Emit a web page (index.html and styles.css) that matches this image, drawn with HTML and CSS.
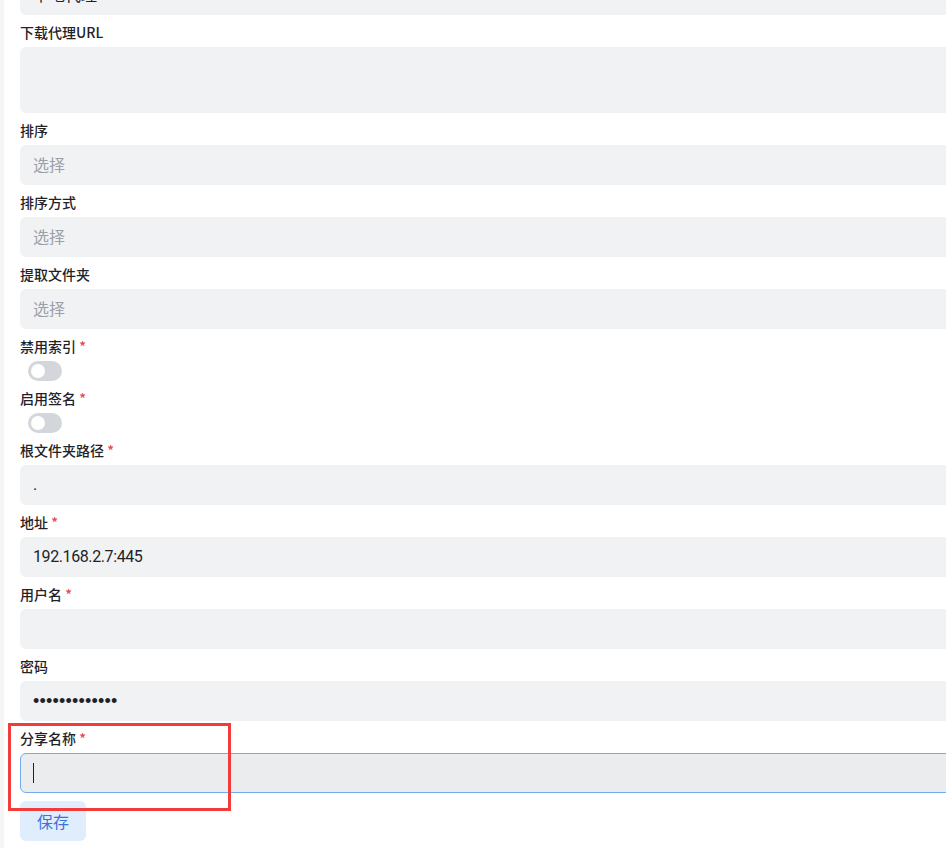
FILE: index.html
```html
<!DOCTYPE html>
<html lang="zh-CN">
<head>
<meta charset="UTF-8">
<meta name="viewport" content="width=device-width, initial-scale=1.0">
<title>存储设置</title>
<link rel="stylesheet" href="styles.css">
</head>
<body>
<div class="page">
    <form class="storage-form">
        <div class="field field-scrolled">
            <div class="control">本地代理</div>
        </div>

        <div class="field">
            <label class="field-label">下载代理URL</label>
            <div class="control control-textarea"></div>
        </div>

        <div class="field">
            <label class="field-label">排序</label>
            <div class="control placeholder">选择</div>
        </div>

        <div class="field">
            <label class="field-label">排序方式</label>
            <div class="control placeholder">选择</div>
        </div>

        <div class="field">
            <label class="field-label">提取文件夹</label>
            <div class="control placeholder">选择</div>
        </div>

        <div class="field">
            <label class="field-label">禁用索引 <span class="required">*</span></label>
            <div class="switch"><span class="switch-knob"></span></div>
        </div>

        <div class="field">
            <label class="field-label">启用签名 <span class="required">*</span></label>
            <div class="switch"><span class="switch-knob"></span></div>
        </div>

        <div class="field">
            <label class="field-label">根文件夹路径 <span class="required">*</span></label>
            <div class="control value">.</div>
        </div>

        <div class="field">
            <label class="field-label">地址 <span class="required">*</span></label>
            <div class="control value">192.168.2.7:445</div>
        </div>

        <div class="field">
            <label class="field-label">用户名 <span class="required">*</span></label>
            <div class="control"></div>
        </div>

        <div class="field">
            <label class="field-label">密码</label>
            <div class="control password">•••••••••••••</div>
        </div>

        <div class="field">
            <label class="field-label">分享名称 <span class="required">*</span></label>
            <div class="control control-focus"><span class="caret"></span></div>
        </div>

        <div class="actions">
            <button type="button" class="save-button">保存</button>
        </div>
    </form>

    <div class="highlight-box"></div>
</div>
</body>
</html>
```

FILE: styles.css
```css
html, body {
    margin: 0;
    padding: 0;
    height: 100%;
    overflow: hidden;
    background-color: white;
    font-family: "Segoe UI", "Noto Sans", "Noto Sans CJK SC", sans-serif;
    color: #1f2328;
}

.page {
    position: relative;
    height: 100%;
    border-left: 4px solid #f5f5f6;
}

.storage-form {
    display: flex;
    flex-direction: column;
    gap: 8px;
    width: 1000px;
    padding-left: 16px;
}

.field {
    display: flex;
    flex-direction: column;
    gap: 4px;
}

.field-scrolled {
    margin-top: -25px;
}

.field-label {
    height: 20px;
    line-height: 18px;
    font-size: 14px;
    font-weight: 500;
    font-family: "Noto Sans CJK SC", "Noto Sans", sans-serif;
    color: #1f2328;
}

.required {
    color: #e5484d;
}

.control {
    box-sizing: border-box;
    height: 40px;
    line-height: 38px;
    padding: 0 12px;
    border: 1px solid transparent;
    border-radius: 6px;
    background-color: #f1f2f4;
    font-size: 16px;
    color: #1f2328;
}

.control-textarea {
    height: 66px;
}

.placeholder {
    color: #9aa0a8;
}

.value {
    font-family: Roboto, "Noto Sans CJK SC", sans-serif;
    letter-spacing: -0.4px;
}

.password {
    font-family: "Liberation Sans", sans-serif;
    font-size: 18px;
    letter-spacing: 0.2px;
}

.control-focus {
    background-color: #ebecee;
    border-color: #72acef;
    display: flex;
    align-items: center;
}

.caret {
    width: 1px;
    height: 20px;
    background-color: #1f2328;
}

.switch {
    position: relative;
    margin-left: 8px;
    width: 34px;
    height: 20px;
    border-radius: 10px;
    background-color: #d3d6db;
}

.switch-knob {
    position: absolute;
    top: 3px;
    left: 3px;
    width: 14px;
    height: 14px;
    border-radius: 50%;
    background-color: white;
}

.actions {
    display: flex;
}

.save-button {
    height: 40px;
    padding: 0 17px;
    border: none;
    border-radius: 6px;
    background-color: #e0edfd;
    color: #3e72d9;
    font-size: 16px;
    font-family: "Noto Sans CJK SC", sans-serif;
    cursor: pointer;
}

/* red annotation round the last field */
.highlight-box {
    position: absolute;
    top: 723px;
    left: 4px;
    width: 217px;
    height: 82px;
    border: 3px solid #f23c3c;
}
```
